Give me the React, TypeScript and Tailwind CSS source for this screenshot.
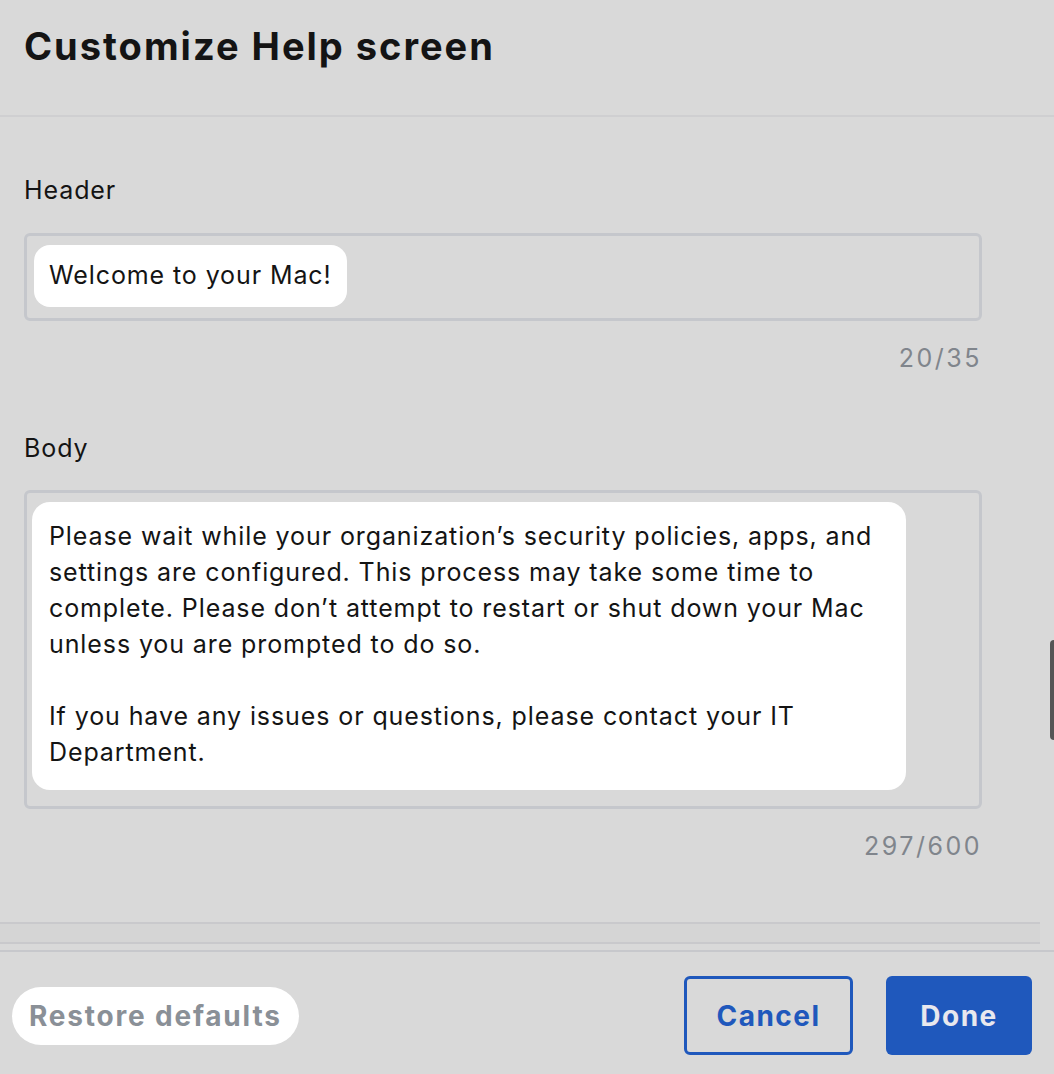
export default function App() {
  return (
    <div className="relative w-[1054px] h-[1074px] bg-[#d9d9d9] overflow-hidden text-[#141414]" style={{ fontFamily: "Inter, 'Liberation Sans', sans-serif" }}>
      <div className="h-[117px] border-b-2 border-[#cfcfd1] px-[24px] pt-[22px]">
        <h1 className="text-[38px] font-bold leading-[48px] tracking-[2px]">Customize Help screen</h1>
      </div>
      <div className="px-[24px] pt-[56px] w-[1006px] tracking-[0.9px]">
        <div className="text-[25px] leading-[34px]">Header</div>
        <div className="mt-[26px] h-[88px] border-[3px] border-[#c5c7cc] rounded-[6px] p-[9px] pl-[7px]">
          <div className="inline-flex items-center h-[62px] bg-white rounded-[16px] px-[15px] text-[25px]">Welcome to your Mac!</div>
        </div>
        <div className="mt-[20px] text-right text-[25px] leading-[34px] text-[#80858c] tracking-[2.5px]">20/35</div>
        <div className="mt-[56px] text-[25px] leading-[34px]">Body</div>
        <div className="mt-[25px] h-[319px] border-[3px] border-[#c5c7cc] rounded-[6px] p-[9px] pl-[5px]">
          <div className="w-[874px] h-[288px] bg-white rounded-[18px] px-[17px] pt-[16px] text-[25px] leading-[36px]">
            <p>Please wait while your organization’s security policies, apps, and settings are configured. This process may take some time to complete. Please don’t attempt to restart or shut down your Mac unless you are prompted to do so.</p>
            <p className="mt-[36px]">If you have any issues or questions, please contact your IT Department.</p>
          </div>
        </div>
        <div className="mt-[20px] text-right text-[25px] leading-[34px] text-[#80858c] tracking-[2.5px]">297/600</div>
      </div>
      <div className="mt-[59px] w-[1040px] h-[22px] border-y-2 border-[#c9c9cc] bg-[#d5d5d5]" />
      <div className="mt-[6px] border-t-2 border-[#c7c8cc] flex items-center justify-between pl-[12px] pr-[22px] pt-[24px]">
        <div className="h-[58px] px-[17px] bg-white rounded-full flex items-center text-[28px] font-bold text-[#8a9097] tracking-[1.8px]">Restore defaults</div>
        <div className="flex gap-[33px]">
          <button className="w-[169px] h-[79px] border-[3px] border-[#1f58bc] rounded-[6px] text-[28px] font-bold text-[#1f58bc] tracking-[1.5px]">Cancel</button>
          <button className="w-[146px] h-[79px] bg-[#1f58bc] rounded-[6px] text-[28px] font-bold text-[#e8e8ee] tracking-[1.5px]">Done</button>
        </div>
      </div>
      <div className="absolute right-0 top-[640px] w-[4px] h-[100px] bg-[#555] rounded-l" />
    </div>
  );
}
